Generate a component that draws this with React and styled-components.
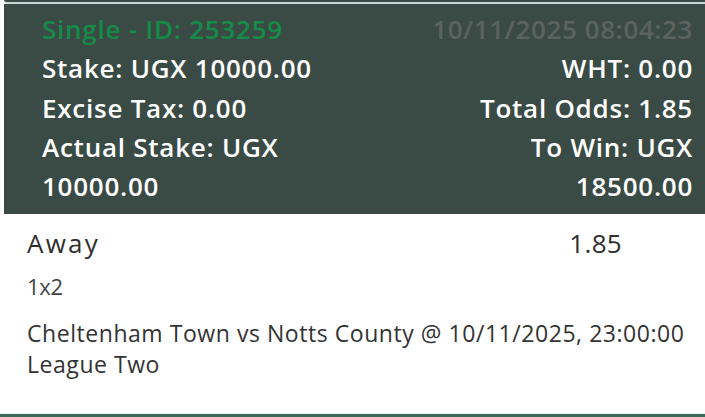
import React from "react";
import styled, { createGlobalStyle } from "styled-components";

const Global = createGlobalStyle`
  html, body { margin: 0; padding: 0; background: #ffffff; }
  body { font-family: "Open Sans", "Noto Sans", sans-serif; overflow: hidden; }
`;

const Page = styled.div`
  width: 705px;
  height: 417px;
  display: flex;
  flex-direction: column;
  background: #ffffff;
`;

const PrevCardEdge = styled.div`
  margin-left: 4px;
  height: 2px;
  background: #3a4a44;
  border-bottom-left-radius: 4px;
  border-bottom: 2px solid #c9d6d8;
`;

const Summary = styled.div`
  margin-left: 4px;
  background: #3a4b45;
  padding: 6px 12px 8px 38px;
  display: flex;
  flex-direction: column;
`;

const Row = styled.div`
  display: flex;
  justify-content: space-between;
  align-items: flex-start;
`;

const Cell = styled.div`
  font-size: 26px;
  font-weight: 600;
  line-height: 39.3px;
  letter-spacing: ${(p) => (p.$dim ? "0.6px" : "0.75px")};
  color: ${(p) => p.$color || "#ffffff"};
  text-align: ${(p) => (p.$right ? "right" : "left")};
  white-space: nowrap;
`;

const Selection = styled.div`
  padding: 8px 0 0 27px;
  display: flex;
  flex-direction: column;
  flex: 1;
  border-bottom: 3px solid #3d6b57;
  box-shadow: inset 0 -1px 0 #e3f5ee;
`;

const PickRow = styled.div`
  width: 595px;
  display: flex;
  justify-content: space-between;
  align-items: center;
  height: 42px;
`;

const Pick = styled.div`
  font-size: 26px;
  font-weight: 500;
  color: #2e2e2e;
  letter-spacing: ${(p) => (p.$odds ? "0.3px" : "2.2px")};
`;

const Market = styled.div`
  font-size: 22px;
  color: #444444;
  line-height: 44px;
  letter-spacing: -0.3px;
`;

const Event = styled.div`
  font-size: 23px;
  color: #333333;
  line-height: 31px;
  letter-spacing: 0.55px;
  margin-top: 10px;
`;

export default function App() {
  return (
    <Page>
      <Global />
      <PrevCardEdge />
      <Summary>
        <Row>
          <Cell $color="#168a48">Single - ID: 253259</Cell>
          <Cell $right $dim $color="#5a6360">10/11/2025 08:04:23</Cell>
        </Row>
        <Row>
          <Cell>Stake: UGX 10000.00</Cell>
          <Cell $right>WHT: 0.00</Cell>
        </Row>
        <Row>
          <Cell>Excise Tax: 0.00</Cell>
          <Cell $right>Total Odds: 1.85</Cell>
        </Row>
        <Row>
          <Cell>
            Actual Stake: UGX
            <br />
            10000.00
          </Cell>
          <Cell $right>
            To Win: UGX
            <br />
            18500.00
          </Cell>
        </Row>
      </Summary>
      <Selection>
        <PickRow>
          <Pick>Away</Pick>
          <Pick $odds>1.85</Pick>
        </PickRow>
        <Market>1x2</Market>
        <Event>
          Cheltenham Town vs Notts County @ 10/11/2025, 23:00:00
          <br />
          League Two
        </Event>
      </Selection>
    </Page>
  );
}
